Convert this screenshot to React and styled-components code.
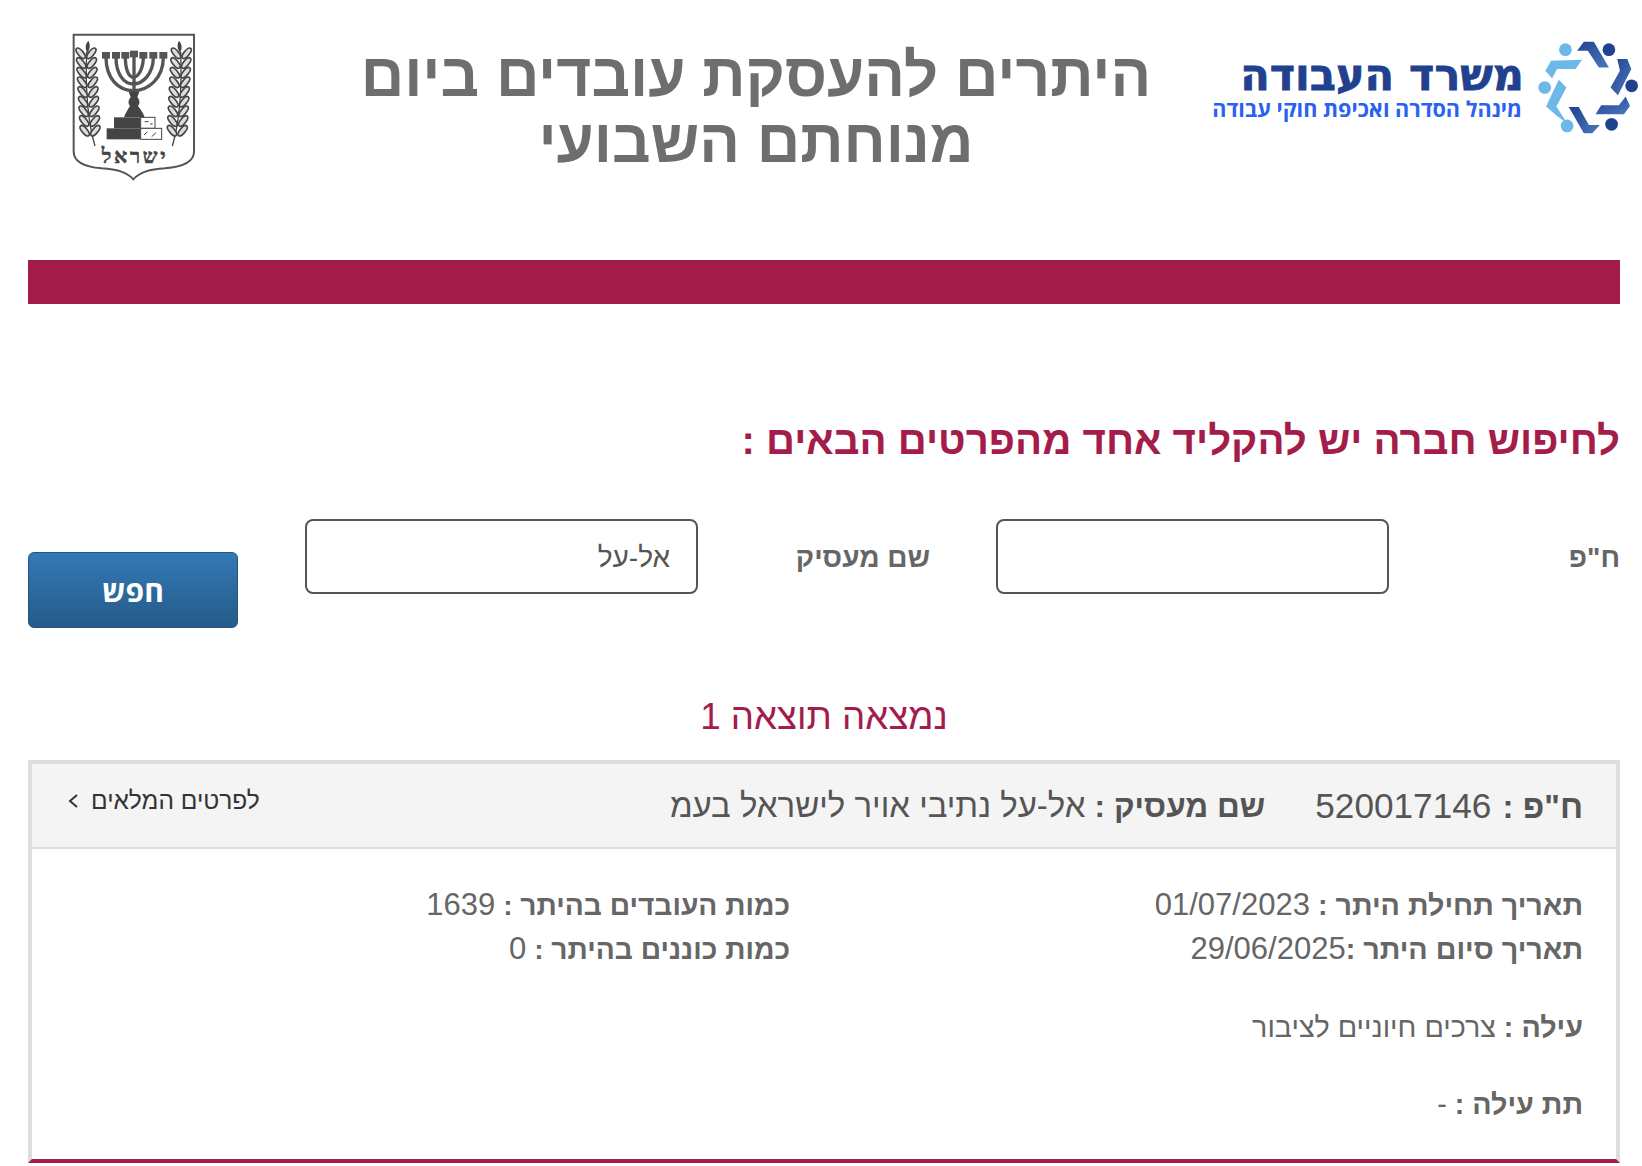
import React from 'react';
import styled, { createGlobalStyle } from 'styled-components';

const wine = '#a31c4a';

const GlobalStyle = createGlobalStyle`
  html, body {
    margin: 0;
    padding: 0;
    background: #fff;
    overflow: hidden;
  }
  body {
    font-family: "Liberation Sans", Arial, sans-serif;
    color: #666;
  }
`;

const Page = styled.div`
  direction: rtl;
  width: 1642px;
  height: 1166px;
  box-sizing: border-box;
`;
const Header = styled.header`
  display: grid;
  grid-template-columns: 483px 800px 1fr;
  height: 260px;
  box-sizing: border-box;
  padding-right: 3px;
`;
const LogoBlock = styled.div`
  display: flex;
  align-items: flex-start;
  gap: 15px;
  padding-top: 39px;
`;
const LogoText = styled.div`
  display: flex;
  flex-direction: column;
  margin-top: 15px;
  white-space: nowrap;
`;
const LogoTitle = styled.span`
  margin-right: -2px;
  font-family: "DejaVu Sans", sans-serif;
  font-weight: 700;
  font-size: 43px;
  line-height: 42px;
  color: #21418f;
  -webkit-text-stroke: 0.8px #21418f;
`;
const LogoSub = styled.span`
  font-family: "Open Sans", "DejaVu Sans", sans-serif;
  font-weight: 700;
  font-size: 21.6px;
  line-height: 26px;
  color: #2a62f0;
`;
const Title = styled.h1`
  margin: 42px 0 0;
  font-size: 60.3px;
  line-height: 66px;
  font-weight: 700;
  text-align: center;
  color: #6e6e6e;
`;
const EmblemBlock = styled.div`
  justify-self: end;
  margin: 20px 0 0 50px;
`;
const Bar = styled.div`
  height: 44px;
  margin: 0 22px 0 28px;
  background: ${wine};
`;
const Main = styled.main`
  padding: 0 22px 0 28px;
`;
const SearchTitle = styled.h2`
  margin: 115px 0 0;
  font-size: 40.2px;
  line-height: 44px;
  font-weight: 700;
  color: ${wine};
`;
const SearchForm = styled.form`
  display: flex;
  align-items: flex-start;
  margin-top: 56px;
`;
const FieldLabel = styled.label`
  width: ${p => p.$width}px;
  height: 75px;
  padding-top: 3px;
  box-sizing: border-box;
  display: flex;
  align-items: center;
  font-size: 28px;
  font-weight: 700;
  color: #666;
`;
const Input = styled.input`
  width: 393px;
  height: 75px;
  box-sizing: border-box;
  margin-left: 66px;
  padding: 2px 26px 0;
  border: 2px solid #555;
  border-radius: 8px;
  background: #fff;
  direction: rtl;
  font-family: inherit;
  font-size: 28px;
  color: #555;
  outline: none;
`;
const SearchButton = styled.button`
  width: 210px;
  height: 76px;
  margin: 33px 1px 0 0;
  border: 1px solid #245580;
  border-radius: 6px;
  background: linear-gradient(#337ab7, #265a88);
  font-family: "Open Sans", "DejaVu Sans", sans-serif;
  font-size: 30px;
  font-weight: 700;
  color: #fff;
`;
const ResultCount = styled.div`
  margin-top: 67px;
  font-size: 36.7px;
  line-height: 44px;
  text-align: center;
  color: ${wine};
`;
const Card = styled.section`
  margin-top: 21px;
  height: 403px;
  box-sizing: border-box;
  border: 4px solid #ddd;
  border-bottom-color: ${wine};
`;
const CardHeader = styled.div`
  display: flex;
  justify-content: space-between;
  align-items: flex-start;
  height: 85px;
  box-sizing: border-box;
  padding: 0 33px 0 35px;
  background: #f4f4f4;
  border-bottom: 2px solid #ddd;
`;
const HeaderFields = styled.div`
  display: flex;
  gap: 50px;
  margin-top: 20px;
  font-size: 33px;
  line-height: 44px;
  color: #555;
`;
const HeaderLabel = styled.b`
  font-size: ${p => p.$size}px;
`;
const HeaderNumber = styled.span`
  margin-right: 2px;
  font-size: 35.2px;
`;
const DetailsLink = styled.a`
  display: flex;
  align-items: center;
  gap: 12px;
  margin-top: 19px;
  font-size: 24.5px;
  line-height: 36px;
  color: #333;
`;
const CardBody = styled.div`
  display: grid;
  grid-template-columns: 793px 1fr;
  padding: 34px 33px 0 35px;
  line-height: 44px;
  color: #666;
`;
const InfoColumn = styled.div`
  display: flex;
  flex-direction: column;
  font-size: ${p => p.$size}px;
`;
const InfoRow = styled.div`
  margin-top: ${p => p.$top || 0}px;
`;
const InfoNumber = styled.span`
  font-size: 31px;
`;
const EmblemWord = styled.text`
  direction: rtl;
  font-family: "Liberation Serif", serif;
  font-size: 62px;
  font-weight: 700;
  letter-spacing: 8px;
  fill: #444;
  stroke: #444;
  stroke-width: 1.5px;
`;

function Leaves() {
  const leaves = [];
  for (let i = 0; i < 9; i++) {
    const y = 100 + i * 29;
    const x = 108 + i * 1.5;
    leaves.push(
      <g key={i}>
        <ellipse cx={x - 16} cy={y} rx="19" ry="8" transform={`rotate(50 ${x - 16} ${y})`} fill="#ddd" stroke="#444" strokeWidth="5" />
        <ellipse cx={x + 16} cy={y} rx="19" ry="8" transform={`rotate(-50 ${x + 16} ${y})`} fill="#ddd" stroke="#444" strokeWidth="5" />
      </g>
    );
  }
  return (
    <g>
      <path d="M115 62 C105 75 105 85 112 98 C120 85 122 75 115 62Z" fill="#444" />
      <path d="M110 95 C106 200 112 300 135 378" fill="none" stroke="#444" strokeWidth="4" />
      {leaves}
    </g>
  );
}

function Emblem() {
  return (
    <svg width="170" height="170" viewBox="0 0 510 510">
      <path d="M71 44 H432 V395 C432 425 400 440 345 445 C300 448 270 455 250 478 C230 455 200 448 155 445 C100 440 71 425 71 395 Z" fill="#fff" stroke="#555" strokeWidth="6" />
      <Leaves />
      <g transform="matrix(-1 0 0 1 502 0)">
        <Leaves />
      </g>
      <g fill="none" stroke="#555" strokeWidth="10">
        <path d="M168 112 C168 175 205 212 250 212 C295 212 340 175 340 112" />
        <path d="M198 112 C198 160 220 192 250 192 C280 192 310 160 310 112" />
        <path d="M226 112 C226 145 235 172 250 172 C265 172 280 145 280 112" />
        <path d="M252 96 V240" />
      </g>
      <g fill="#555">
        <rect x="156" y="96" width="24" height="20" />
        <rect x="186" y="96" width="24" height="20" />
        <rect x="214" y="96" width="24" height="20" />
        <rect x="240" y="92" width="24" height="20" />
        <rect x="268" y="96" width="24" height="20" />
        <rect x="298" y="96" width="24" height="20" />
        <rect x="328" y="96" width="24" height="20" />
      </g>
      <g fill="#444">
        <path d="M236 215 H268 L262 232 C270 240 270 252 264 258 C272 268 280 280 284 292 H222 C226 280 234 268 240 258 C234 252 234 240 242 232 Z" />
        <rect x="192" y="292" width="80" height="33" />
        <rect x="170" y="325" width="102" height="33" />
      </g>
      <g fill="#fff" stroke="#444" strokeWidth="3">
        <rect x="272" y="292" width="43" height="33" />
        <rect x="272" y="325" width="63" height="33" />
        <path d="M282 345 L292 335 M305 350 L318 338 M284 305 H296 M300 312 H308" />
      </g>
      <EmblemWord x="255" y="428" textAnchor="middle">ישראל</EmblemWord>
    </svg>
  );
}

function LogoMark() {
  return (
    <svg width="102" height="97" viewBox="1070 60 305 290">
      <defs>
        <linearGradient id="darkMark" x1="0" y1="0" x2="1" y2="1">
          <stop offset="0" stopColor="#21418f" />
          <stop offset="1" stopColor="#4a79bd" />
        </linearGradient>
      </defs>
      <g fill="#6cb8e8">
        <circle cx="1155" cy="92" r="19" />
        <circle cx="1093" cy="205" r="19" />
        <circle cx="1160" cy="320" r="19" />
        <path d="M1095 155 L1112 125 L1205 122 L1185 150 L1130 150 L1115 178 Z" />
        <path d="M1135 182 L1158 205 L1128 262 L1160 312 L1130 290 L1097 262 Z" />
      </g>
      <g fill="#21418f">
        <circle cx="1285" cy="92" r="19" />
        <circle cx="1353" cy="200" r="19" />
        <circle cx="1293" cy="315" r="19" />
      </g>
      <g fill="url(#darkMark)">
        <path d="M1190 95 L1210 68 L1240 68 L1285 145 L1255 145 L1222 95 Z" />
        <path d="M1310 120 L1340 120 L1352 150 L1312 228 L1290 205 L1318 155 Z" />
        <path d="M1335 232 L1348 260 L1330 285 L1245 285 L1262 258 L1315 258 Z" />
        <path d="M1165 263 L1195 263 L1225 317 L1258 317 L1235 342 L1210 342 Z" />
      </g>
    </svg>
  );
}

function Chevron() {
  return (
    <svg width="12" height="16" viewBox="0 0 12 16">
      <path d="M10 2 L3 8 L10 14" fill="none" stroke="#333" strokeWidth="2" />
    </svg>
  );
}

export default function App() {
  return (
    <Page>
      <GlobalStyle />
      <Header>
        <LogoBlock>
          <LogoMark />
          <LogoText>
            <LogoTitle>משרד העבודה</LogoTitle>
            <LogoSub>מינהל הסדרה ואכיפת חוקי עבודה</LogoSub>
          </LogoText>
        </LogoBlock>
        <Title>היתרים להעסקת עובדים ביום<br />מנוחתם השבועי</Title>
        <EmblemBlock>
          <Emblem />
        </EmblemBlock>
      </Header>
      <Bar />
      <Main>
        <SearchTitle>לחיפוש חברה יש להקליד אחד מהפרטים הבאים :</SearchTitle>
        <SearchForm>
          <FieldLabel $width={231}>ח"פ</FieldLabel>
          <Input />
          <FieldLabel $width={232}>שם מעסיק</FieldLabel>
          <Input defaultValue="אל-על" />
          <SearchButton type="button">חפש</SearchButton>
        </SearchForm>
        <ResultCount>נמצאה תוצאה 1</ResultCount>
        <Card>
          <CardHeader>
            <HeaderFields>
              <span><HeaderLabel $size={33}>ח"פ :</HeaderLabel> <HeaderNumber>520017146</HeaderNumber></span>
              <span><HeaderLabel $size={31.6}>שם מעסיק :</HeaderLabel> אל-על נתיבי אויר לישראל בעמ</span>
            </HeaderFields>
            <DetailsLink>
              לפרטים המלאים
              <Chevron />
            </DetailsLink>
          </CardHeader>
          <CardBody>
            <InfoColumn $size={28.7}>
              <InfoRow><b>תאריך תחילת היתר :</b> <InfoNumber>01/07/2023</InfoNumber></InfoRow>
              <InfoRow><b>תאריך סיום היתר :</b><InfoNumber>29/06/2025</InfoNumber></InfoRow>
              <InfoRow $top={34}><b>עילה :</b> צרכים חיוניים לציבור</InfoRow>
              <InfoRow $top={33}><b>תת עילה :</b> -</InfoRow>
            </InfoColumn>
            <InfoColumn $size={28.2}>
              <InfoRow><b>כמות העובדים בהיתר :</b> <InfoNumber>1639</InfoNumber></InfoRow>
              <InfoRow><b>כמות כוננים בהיתר :</b> <InfoNumber>0</InfoNumber></InfoRow>
            </InfoColumn>
          </CardBody>
        </Card>
      </Main>
    </Page>
  );
}
